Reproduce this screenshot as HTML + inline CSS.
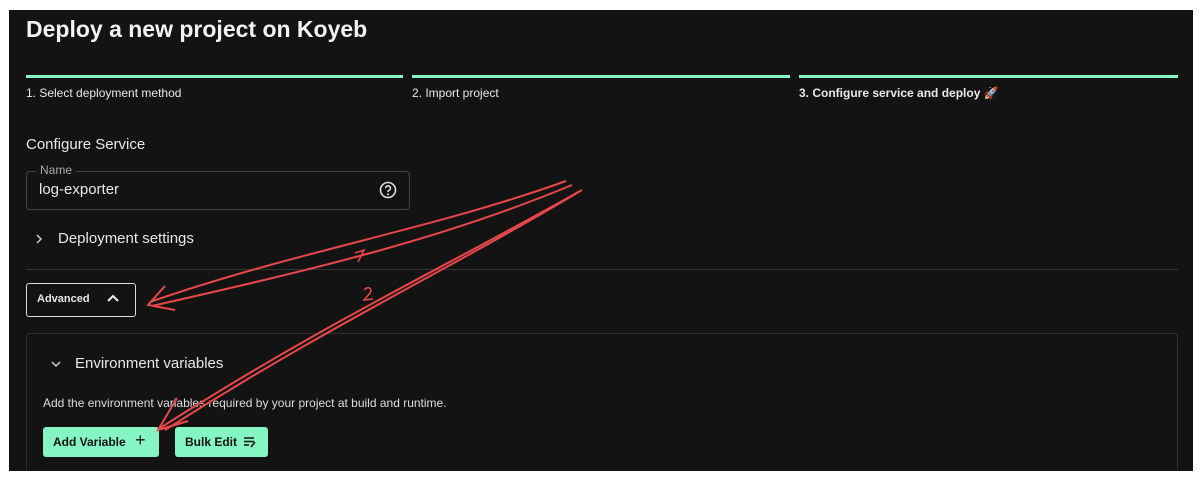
<!DOCTYPE html>
<html><head><style>
body{margin:0;background:#fff;width:1203px;height:481px;overflow:hidden;font-family:"Liberation Sans",sans-serif;position:relative}
.p{position:absolute;left:9px;top:10px;width:1184px;height:461px;background:#131313}
.a{position:absolute;color:#e8e8e8;white-space:nowrap}
.ln{position:absolute;top:75px;height:3px;background:#86f5c4}
.btn{position:absolute;background:#86f5c4;border-radius:3px;color:#111;font-size:12px;font-weight:bold}
</style></head><body>
<div class="p"></div>
<div class="a" style="left:26px;top:16px;font-size:23px;font-weight:bold;color:#f2f2f2">Deploy a new project on Koyeb</div>
<div class="ln" style="left:26px;width:377px"></div>
<div class="ln" style="left:412px;width:378px"></div>
<div class="ln" style="left:799px;width:379px"></div>
<div class="a" style="left:26px;top:86px;font-size:12px">1. Select deployment method</div>
<div class="a" style="left:412px;top:86px;font-size:12px">2. Import project</div>
<div class="a" style="left:799px;top:86px;font-size:12px;font-weight:bold">3. Configure service and deploy 🚀</div>
<div class="a" style="left:26px;top:136px;font-size:15px">Configure Service</div>
<div style="position:absolute;left:26px;top:171px;width:382px;height:37px;border:1px solid #444;border-radius:4px"></div>
<div class="a" style="left:36px;top:163px;font-size:12px;color:#aaa;background:#131313;padding:0 4px">Name</div>
<div class="a" style="left:39px;top:181px;font-size:15px">log-exporter</div>
<svg style="position:absolute;left:378px;top:180px" width="20" height="20" viewBox="0 0 20 20"><circle cx="10" cy="10" r="7.5" fill="none" stroke="#ddd" stroke-width="1.6"/><path d="M7.6 8.2a2.4 2.4 0 1 1 3.4 2.2c-.7.3-1 .8-1 1.5" fill="none" stroke="#ddd" stroke-width="1.6"/><circle cx="10" cy="14.3" r="1" fill="#ddd"/></svg>
<svg style="position:absolute;left:34px;top:233px" width="10" height="12"><path d="M3 2L7 6L3 10" fill="none" stroke="#ccc" stroke-width="1.5"/></svg>
<div class="a" style="left:58px;top:230px;font-size:15px">Deployment settings</div>
<div style="position:absolute;left:26px;top:269px;width:1152px;height:1px;background:#333"></div>
<div style="position:absolute;left:26px;top:283px;width:108px;height:32px;border:1px solid #ddd;border-radius:3px"></div>
<div class="a" style="left:37px;top:293px;font-size:11px;font-weight:bold">Advanced</div>
<svg style="position:absolute;left:106px;top:292px" width="14" height="12"><path d="M2 9L7 4L12 9" fill="none" stroke="#eee" stroke-width="2"/></svg>
<div style="position:absolute;left:26px;top:333px;width:1150px;height:137px;border:1px solid #2e2e2e;border-bottom:none;border-radius:4px 4px 0 0"></div>
<svg style="position:absolute;left:50px;top:359px" width="12" height="10"><path d="M2 3L6 7L10 3" fill="none" stroke="#ccc" stroke-width="1.5"/></svg>
<div class="a" style="left:75px;top:355px;font-size:15px">Environment variables</div>
<div class="a" style="left:43px;top:396px;font-size:12px;color:#ddd">Add the environment variables required by your project at build and runtime.</div>
<div class="btn" style="left:43px;top:427px;width:116px;height:30px"><span style="position:absolute;left:10px;top:8px">Add Variable</span><span style="position:absolute;left:92px;top:3px;font-size:18px;font-weight:normal">+</span></div>
<div class="btn" style="left:175px;top:427px;width:93px;height:30px"><span style="position:absolute;left:10px;top:8px">Bulk Edit</span><svg style="position:absolute;left:68px;top:9px" width="14" height="12"><path d="M1 2H11M1 5.5H11M1 9H6M8 11L12 6" stroke="#111" stroke-width="1.6" fill="none"/></svg></div>
<svg style="position:absolute;left:0;top:0" width="1203" height="481" fill="none" stroke="#e8474a" stroke-width="2">
<path d="M566 181C430 230 300 250 150 302"/>
<path d="M572 185C440 240 310 270 152 306"/>
<path d="M580 191C440 270 330 320 160 428"/>
<path d="M582 190C445 272 335 322 165 430"/>
<path d="M165 286L148 305L175 310"/>
<path d="M177 398L158 430L188 421"/>
<path d="M355 253L364 250L358 262" stroke-width="1.5"/>
<path d="M364 290c4-4 9-2 6 3l-6 7l9-1" stroke-width="1.5"/>
</svg>
</body></html>
